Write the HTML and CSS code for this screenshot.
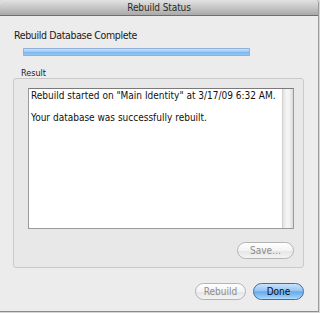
FILE: index.html
```html
<!DOCTYPE html>
<html>
<head>
<meta charset="utf-8">
<link rel="stylesheet" href="styles.css">
</head>
<body>
<div class="window">
  <div class="titlebar">Rebuild Status</div>
  <div class="content">
    <div class="status">Rebuild Database Complete</div>
    <div class="progress"></div>
    <div class="group-label">Result</div>
    <div class="group">
      <div class="textarea">
        <div class="text">
          <p>Rebuild started on "Main Identity" at 3/17/09 6:32 AM.</p>
          <p>Your database was successfully rebuilt.</p>
        </div>
        <div class="scrollbar"></div>
      </div>
      <div class="group-actions"><button class="btn disabled btn-save">Save…</button></div>
    </div>
    <div class="actions">
      <button class="btn disabled">Rebuild</button>
      <button class="btn primary">Done</button>
    </div>
  </div>
</div>
</body>
</html>
```
FILE: styles.css
```css
html, body {
  margin: 0;
  padding: 0;
  background: #d6d6d6;
}
* {
  box-sizing: border-box;
}
body {
  width: 320px;
  height: 313px;
  overflow: hidden;
  font-family: "DejaVu Sans Condensed", "DejaVu Sans", sans-serif;
}
.window {
  width: 319px;
  height: 312px;
  background: #ececec;
  border-right: 1px solid #9a9a9a;
  border-bottom: 1px solid #8c8c8c;
  border-radius: 4px 4px 0 0;
  overflow: hidden;
  display: flex;
  flex-direction: column;
}
.titlebar {
  height: 16px;
  line-height: 15px;
  border-bottom: 1px solid #6e6e6e;
  background: linear-gradient(#e2e2e2, #c6c6c6 50%, #a9a9a9);
  text-align: center;
  font-size: 10px;
  letter-spacing: -0.1px;
  color: #2a2a2a;
}
.content {
  flex: 1;
  display: flex;
  flex-direction: column;
  padding: 13px 14px 0 13px;
}
.status {
  font-size: 10.5px;
  line-height: 13px;
  color: #1a1a1a;
  padding-left: 1px;
  letter-spacing: -0.35px;
}
.progress {
  margin: 6px 0 0 10px;
  width: 227px;
  height: 8px;
  border-radius: 1px;
  background: linear-gradient(#d4e8fc, #a9d0f6 40%, #7fb7ef 55%, #8ec4f4 80%, #b4dafc);
  box-shadow: 0 0 0 1px #8fb2dc inset;
}
.group-label {
  margin: 12px 0 0 8px;
  font-size: 9px;
  line-height: 10px;
  color: #222;
}
.group {
  height: 190px;
  border: 1px solid #cacaca;
  border-radius: 3px;
  background: #e8e8e8;
  display: flex;
  flex-direction: column;
  padding: 9px 9px 0 14px;
}
.textarea {
  height: 141px;
  border: 1px solid #9a9a9a;
  border-top-color: #7a7a7a;
  background: #fff;
  display: flex;
}
.text {
  flex: 1;
  padding: 1px 2px;
  font-size: 10px;
  line-height: 11px;
  color: #111;
  letter-spacing: 0;
}
.text p {
  margin: 0 0 11px 0;
}
.scrollbar {
  width: 11px;
  background: linear-gradient(90deg, #e2e2e2, #f6f6f6 40%, #efefef 70%, #d8d8d8);
  border-left: 1px solid #d0d0d0;
}
.group-actions {
  display: flex;
  justify-content: flex-end;
  margin-top: 13px;
}
.btn {
  height: 17px;
  border-radius: 9px;
  border: 1px solid #a6a6a6;
  background: linear-gradient(#ffffff, #f3f3f3 50%, #e6e6e6 55%, #f4f4f4);
  font-family: inherit;
  font-size: 10px;
  line-height: 14px;
  padding: 0;
  color: #111;
}
.btn.disabled {
  border-color: #b4b4b4;
  color: #8c8c8c;
}
.btn-save {
  width: 57px;
}
.actions {
  display: flex;
  justify-content: flex-end;
  gap: 7px;
  margin-top: 15px;
}
.actions .btn {
  width: 51px;
}
.btn.primary {
  border-color: #3d6fa9;
  background: linear-gradient(#c9e2fb, #97c5f1 45%, #6aa9ea 52%, #8ec8fa 85%, #b8e0ff);
  color: #0c0c0c;
}
```
